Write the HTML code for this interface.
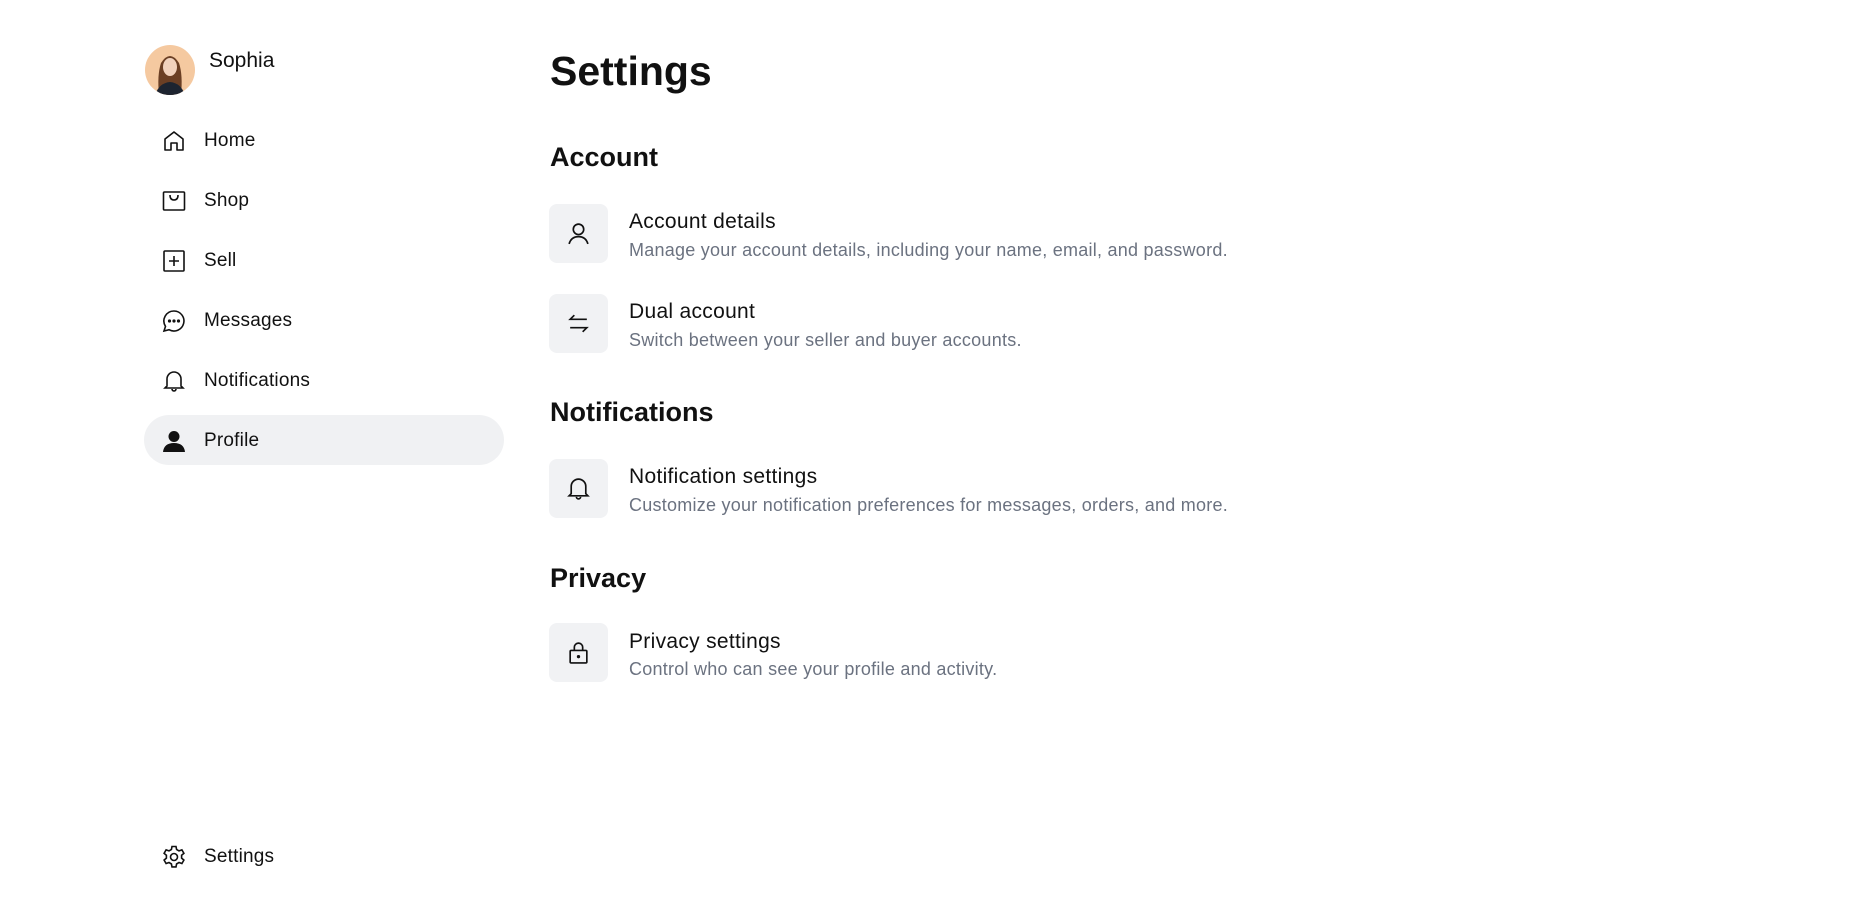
<!DOCTYPE html>
<html><head><meta charset="utf-8"><style>
*{margin:0;padding:0;box-sizing:border-box}
body{width:1852px;height:924px;background:#fff;font-family:"Liberation Sans",sans-serif;color:#111;position:relative;overflow:hidden}
.a{position:absolute;white-space:nowrap}
.nav{position:absolute;left:162px;font-size:19px;line-height:24px;color:#111;letter-spacing:0.2px}
.nav svg{position:absolute;left:0;top:0;width:24px;height:24px}
.nav span{position:absolute;left:42px;top:0}
.box{position:absolute;left:549px;width:59px;height:59px;background:#f1f2f4;border-radius:8px}
.box svg{position:absolute;left:17px;top:17px;width:25px;height:25px}
.t{position:absolute;left:629px;font-size:21px;line-height:24px;color:#111;letter-spacing:0.3px;white-space:nowrap}
.s{position:absolute;left:629px;font-size:18px;line-height:22px;color:#6b7280;letter-spacing:0.25px;white-space:nowrap}
h1,h2{position:absolute;left:550px;font-weight:bold;white-space:nowrap}
h1{font-size:41px;line-height:50px;top:46px}
h2{font-size:27px;line-height:32px}
</style></head><body>
<div class="a" style="left:145px;top:45px;width:50px;height:50px;border-radius:50%;background:#f5c9a0;overflow:hidden">
<svg width="50" height="50" viewBox="0 0 50 50"><path d="M14 50 Q12 30 16 18 Q25 4 34 18 Q38 30 36 50Z" fill="#6b3f24"/><ellipse cx="25" cy="22" rx="7" ry="9" fill="#f1d2bd"/><path d="M10 50 Q14 38 25 37 Q36 38 40 50Z" fill="#1d2430"/></svg></div>
<div class="a" style="left:209px;top:49px;font-size:21px">Sophia</div>
<div class="a" style="left:144px;top:415px;width:360px;height:50px;border-radius:25px;background:#f0f1f3"></div>
<div class="nav" style="top:129px"><svg viewBox="0 0 24 24" fill="none" stroke="#111" stroke-width="1.6" stroke-linejoin="round"><path d="M3 21V10L12 3l9 7v11h-6v-7H9v7z"/></svg><span>Home</span></div>
<div class="nav" style="top:189px"><svg viewBox="0 0 24 24" fill="none" stroke="#111" stroke-width="1.6"><rect x="1.5" y="3" width="21" height="18" rx="1"/><path d="M8 6q0 5 4 5t4-5"/></svg><span>Shop</span></div>
<div class="nav" style="top:249px"><svg viewBox="0 0 24 24" fill="none" stroke="#111" stroke-width="1.6"><rect x="2" y="2" width="20" height="20" rx="1"/><path d="M12 7v10M7 12h10"/></svg><span>Sell</span></div>
<div class="nav" style="top:309px"><svg viewBox="0 0 24 24" fill="none" stroke="#111" stroke-width="1.6"><path d="M12 2a10 10 0 1 1-5 18.7L2 22l1.5-4.6A10 10 0 0 1 12 2z"/><circle cx="7.5" cy="12" r=".8" fill="#111"/><circle cx="12" cy="12" r=".8" fill="#111"/><circle cx="16.5" cy="12" r=".8" fill="#111"/></svg><span>Messages</span></div>
<div class="nav" style="top:369px"><svg viewBox="0 0 24 24" fill="none" stroke="#111" stroke-width="1.6"><path d="M5 17V10a7 7 0 0 1 14 0v7l2 2H3z"/><path d="M10 20a2 2 0 0 0 4 0"/></svg><span>Notifications</span></div>
<div class="nav" style="top:429px"><svg viewBox="0 0 24 24" fill="#111"><circle cx="12" cy="7.5" r="5.5"/><path d="M1 23q1-9 11-9t11 9z"/></svg><span>Profile</span></div>
<div class="nav" style="top:845px"><svg viewBox="0 0 24 24" fill="none" stroke="#111" stroke-width="1.6"><circle cx="12" cy="12" r="3.5"/><path d="M10 1.5h4l.6 3 2.4 1.4 2.9-1 2 3.4-2.3 2v2.8l2.3 2-2 3.4-2.9-1-2.4 1.4-.6 3h-4l-.6-3-2.4-1.4-2.9 1-2-3.4 2.3-2v-2.8l-2.3-2 2-3.4 2.9 1L9.4 4.5z"/></svg><span>Settings</span></div>

<h1>Settings</h1>
<h2 style="top:141px">Account</h2>
<div class="box" style="top:204px"><svg viewBox="0 0 24 24" fill="none" stroke="#111" stroke-width="1.6"><circle cx="12" cy="8" r="5"/><path d="M3 22q2-7 9-7t9 7"/></svg></div>
<div class="t" style="top:210px">Account details</div>
<div class="s" style="top:239px">Manage your account details, including your name, email, and password.</div>
<div class="box" style="top:294px"><svg viewBox="0 0 24 24" fill="none" stroke="#111" stroke-width="1.6"><path d="M20 8H4l4-4M4 16h16l-4 4"/></svg></div>
<div class="t" style="top:300px">Dual account</div>
<div class="s" style="top:329px">Switch between your seller and buyer accounts.</div>
<h2 style="top:396px">Notifications</h2>
<div class="box" style="top:459px"><svg viewBox="0 0 24 24" fill="none" stroke="#111" stroke-width="1.6"><path d="M5 17V10a7 7 0 0 1 14 0v7l2 2H3z"/><path d="M10 20a2 2 0 0 0 4 0"/></svg></div>
<div class="t" style="top:465px">Notification settings</div>
<div class="s" style="top:494px">Customize your notification preferences for messages, orders, and more.</div>
<h2 style="top:562px">Privacy</h2>
<div class="box" style="top:623px"><svg viewBox="0 0 24 24" fill="none" stroke="#111" stroke-width="1.6"><rect x="4" y="10" width="16" height="12" rx="1"/><path d="M8 10V7a4 4 0 0 1 8 0v3"/><circle cx="12" cy="16" r=".8" fill="#111"/></svg></div>
<div class="t" style="top:630px">Privacy settings</div>
<div class="s" style="top:658px">Control who can see your profile and activity.</div>
</body></html>
